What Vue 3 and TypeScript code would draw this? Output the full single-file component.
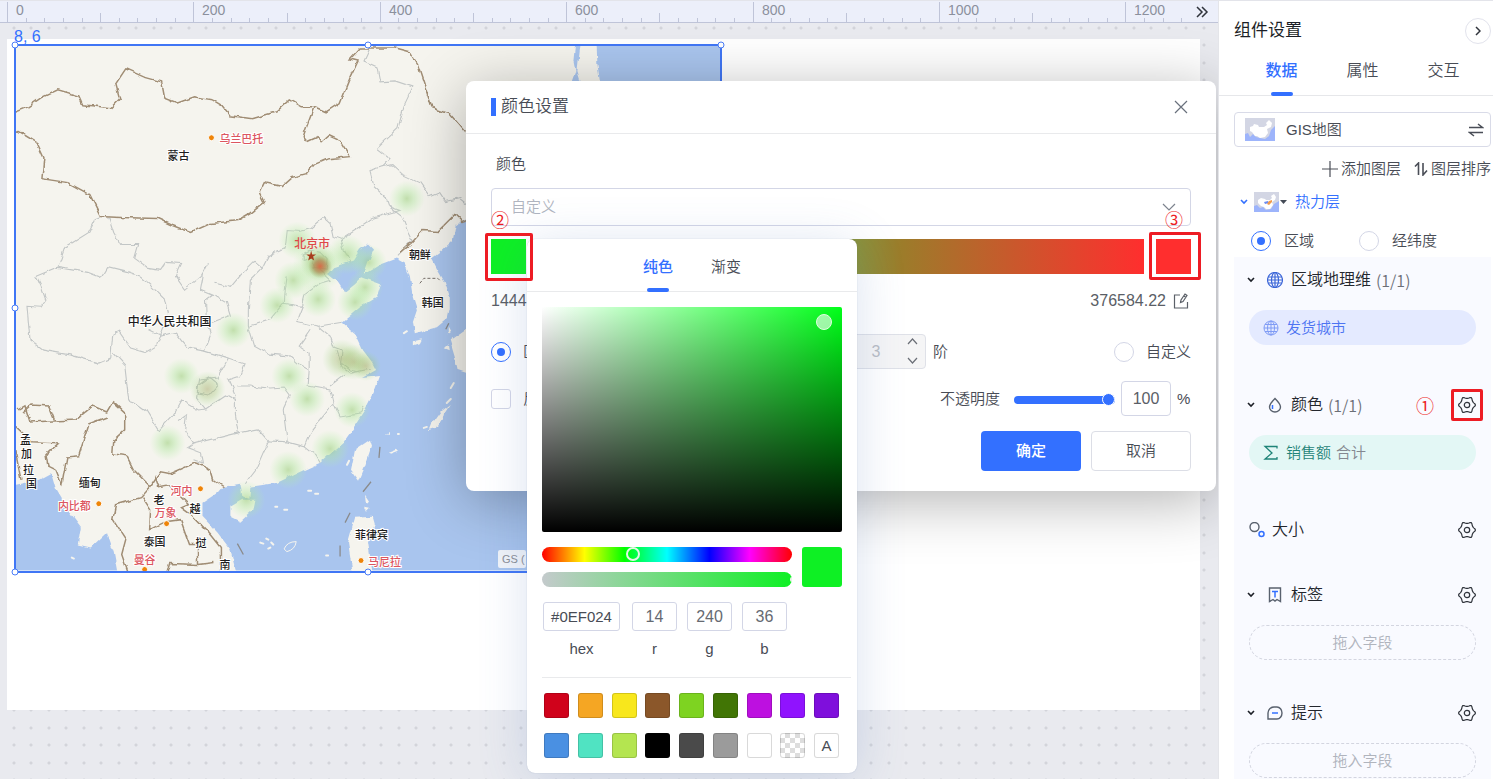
<script setup lang="ts">
import { ref } from 'vue'

const scale = 0.932
const rulerTicks = Array.from({ length: 65 }, (_, i) => ({
  x: Math.round(7 + i * 20 * scale),
  top: i % 10 === 0 ? 1 : i % 5 === 0 ? 12 : 17,
}))
const rulerLabels = [0, 200, 400, 600, 800, 1000, 1200].map((v) => ({
  v,
  x: Math.round(7 + v * scale) + 9,
}))

const gearPath =
  Array.from({ length: 48 }, (_, i) => {
    const a = (i / 48) * Math.PI * 2
    const r = 7.4 + 0.9 * Math.cos(6 * a) + 0.15 * Math.cos(12 * a)
    return `${i ? 'L' : 'M'}${(9 + r * Math.cos(a)).toFixed(2)} ${(9 + r * Math.sin(a)).toFixed(2)}`
  }).join('') + 'Z'

const heat = [
  [407, 198, 18], [297, 240, 19], [293, 280, 19], [318, 299, 18], [347, 254, 20],
  [369, 262, 18], [365, 287, 18], [355, 302, 18], [277, 305, 18], [233, 330, 18],
  [181, 376, 18], [289, 376, 18], [307, 399, 18], [352, 410, 18], [167, 443, 18],
  [330, 449, 19], [288, 470, 19], [246, 500, 19], [318, 266, 26],
]
const denseHeat = [
  [207, 389, 18], [342, 359, 20], [354, 362, 18], [366, 366, 15], [318, 262, 18],
]

interface MapLabel { t: string; x: number; y: number; c?: string }
const mapLabels: MapLabel[] = [
  { t: '蒙古', x: 167, y: 159 },
  { t: '朝鲜', x: 409, y: 259 },
  { t: '韩国', x: 422, y: 307 },
  { t: '孟', x: 19, y: 444 },
  { t: '加', x: 20, y: 458 },
  { t: '拉', x: 22, y: 474 },
  { t: '国', x: 25, y: 488 },
  { t: '缅甸', x: 78, y: 487 },
  { t: '老', x: 153, y: 504 },
  { t: '越', x: 189, y: 513 },
  { t: '泰国', x: 143, y: 546 },
  { t: '挝', x: 195, y: 547 },
  { t: '南', x: 219, y: 569 },
  { t: '菲律宾', x: 355, y: 539 },
  { t: '乌兰巴托', x: 219, y: 142, c: 'capital' },
  { t: '内比都', x: 57, y: 510, c: 'capital' },
  { t: '河内', x: 170, y: 495, c: 'capital' },
  { t: '万象', x: 154, y: 517, c: 'capital' },
  { t: '曼谷', x: 133, y: 564, c: 'capital' },
  { t: '马尼拉', x: 368, y: 566, c: 'capital' },
]
const cityDots = [[211, 137], [200, 489], [98, 504], [166, 524], [144, 570], [361, 561]]

const presets = [
  'c-red', 'c-orange', 'c-yellow', 'c-brown', 'c-lime', 'c-green', 'c-magenta', 'c-violet', 'c-purple',
  'c-blue', 'c-teal', 'c-pale', 'c-black', 'c-dark', 'c-gray', 'c-white', 'c-none', 'c-auto',
]

const tab = ref('数据')
const position = ref('region')
const step = ref('range')
const opacity = ref(100)
const hex = ref('#0EF024')
const rgb = ref([
  { k: 'r', v: 14 },
  { k: 'g', v: 240 },
  { k: 'b', v: 36 },
])

const sections = [
  { id: 'geo', title: '区域地理维', count: '(1/1)', field: '发货城市', extra: '', gear: false },
  { id: 'color', title: '颜色', count: '(1/1)', field: '销售额', extra: '合计', gear: true },
  { id: 'size', title: '大小', count: '', field: '', extra: '', gear: true },
  { id: 'label', title: '标签', count: '', field: '', extra: '', gear: true },
  { id: 'tip', title: '提示', count: '', field: '', extra: '', gear: true },
]
</script>

<template>
  <div class="page">
    <main class="workspace">
      <div class="ruler">
        <svg class="ruler-scale" height="23" aria-hidden="true">
          <line v-for="t in rulerTicks" :key="t.x" :x1="t.x + 0.5" :x2="t.x + 0.5" :y1="t.top" y2="22" />
          <text v-for="l in rulerLabels" :key="l.v" :x="l.x" y="14">{{ l.v }}</text>
        </svg>
        <button class="ruler-more" aria-label="展开">
          <svg width="14" height="12" viewBox="0 0 14 12"><path d="M2 1l5 5-5 5M7 1l5 5-5 5" /></svg>
        </button>
      </div>

      <div class="canvas">
        <div class="widget">
          <span class="coords">8, 6</span>
          <svg class="map" viewBox="15 45 706 526">
            <defs>
              <radialGradient id="heat">
                <stop offset="0" stop-color="#9fd080" stop-opacity=".6" />
                <stop offset=".4" stop-color="#aee59c" stop-opacity=".42" />
                <stop offset="1" stop-color="#b8f2aa" stop-opacity="0" />
              </radialGradient>
              <radialGradient id="heat-dense">
                <stop offset="0" stop-color="#a5a868" stop-opacity=".5" />
                <stop offset=".5" stop-color="#9cc470" stop-opacity=".32" />
                <stop offset="1" stop-color="#a0e08c" stop-opacity="0" />
              </radialGradient>
              <radialGradient id="heat-hot">
                <stop offset="0" stop-color="#dd5a3a" stop-opacity=".85" />
                <stop offset=".5" stop-color="#b07a48" stop-opacity=".6" />
                <stop offset="1" stop-color="#90a860" stop-opacity="0" />
              </radialGradient>
              <filter id="rough" x="-5%" y="-5%" width="110%" height="110%">
                <feTurbulence type="fractalNoise" baseFrequency="0.11" numOctaves="2" seed="4" />
                <feDisplacementMap in="SourceGraphic" scale="5" xChannelSelector="R" yChannelSelector="G" />
              </filter>
            </defs>
            <rect x="15" y="45" width="706" height="526" fill="#a9c5ee" />
            <g fill="#f5f4ee" filter="url(#rough)">
              <path d="M0 30H578L575 60L577 70L572 84L540 150L466 219L456 224L453 240L440 252L432 258L437 268L445 282L450 297L450 309L448 318L437 327L415 333L413 322L417 310L413 297L410 277L405 263L396 258L380 264L364 274L368 262L374 249L368 243L360 249L353 260L333 267L328 273L337 280L345 292L355 284L362 277L381 284L377 297L360 307L342 322L355 333L363 350L372 362L376 370L362 378L380 376L375 390L365 410L350 433L343 443L320 463L300 472L277 483L250 487L249 499L242 497L240 484L222 487L217 493L202 503L202 517L217 533L230 550L238 580H118L113 553L106 533L90 548L77 545L80 527L67 510L55 490L50 473L37 480L15 485H0Z" />
              <path d="M230 507L242 500L255 500L253 510L240 522L230 517Z" />
              <path d="M370 440L372 446L365 467L359 481L351 470L355 450Z" />
              <path d="M355 518L373 517L375 524L368 543L373 575H353L348 543Z" />
              <path d="M470 326L450 340L455 357L458 370L470 374Z" />
              <path d="M582 36H597L598 63L602 90H584L578 70Z" />
              <path d="M432 425L442 411L451 404L436 428L430 430ZM414 341l8-2-2 4-6 2Z" />
              <path d="M389 452l8-3 2 2-8 3ZM386 434l3-2v3ZM366 495l4 6-3 3ZM364 508l5 1-3 3ZM449 326l3 6-3 2ZM444 349l4-4 1 6Z" />
            </g>
            <g class="islets">
              <path d="M260 543l3 1M266 539l2 1M271 543l2 2M268 549l2-1M308 491h3M315 494h3M275 507h2M284 510h3M326 556h2M349 461l-2 4M404 333l3-2M398 434h1M454 383l-3 5M447 403l4-4M424 428l3-1M71 558l2 1" />
              <path d="M284 549q3-7 12-7q-1 8-9 10Z" fill="none" />
            </g>
            <g class="province" filter="url(#rough)">
              <path d="M100 216L95 218L88 232L64 247L57 267L35 276L40 286L45 300L40 307L26 306L29 340L42 350L70 355L98 363L110 358L112 334L118 331L130 348L144 352L156 345L160 336L148 330" />
              <path d="M57 267L87 272L100 277L106 267L126 272L140 277L152 287L165 300L168 313L160 336L175 332L188 348L204 351L210 335L206 322L205 300L212 295L200 290L203 273L208 263L201 275L184 289L175 276L181 263L165 262L160 269L147 267L134 258L138 244L120 244L113 232L108 217" />
              <path d="M214 295L226 302L230 315L212 322M214 283L230 287L240 275L254 261L262 268L250 280L248 310L248 325L254 345L270 354L290 356L300 365L309 370L308 386" />
              <path d="M262 268L268 256L285 248L287 230L300 231L311 228L324 217L330 222L333 236L341 239L358 228L372 218L400 210L389 206L386 197L374 186L370 170L382 166L390 158L377 148L398 128L404 105L413 86L395 80L380 81L377 66L364 60L370 47" />
              <path d="M382 166L392 164L403 174L420 182L430 196L440 192L446 201L460 198L470 206M389 206L402 216L408 232L412 240L398 255M341 239L344 249L350 262" />
              <path d="M303 254L310 250L321 252L327 258L326 270L314 268L312 258L303 260ZM318 269L330 280L320 283L305 294L302 306L283 303L284 290L286 275M283 303L270 319L249 326M302 306L296 321L318 326L342 322M318 326L330 336L334 347L342 350L340 366L350 373L370 369M310 330L299 346L309 353L309 370" />
              <path d="M112 352L124 365L128 400L134 402L145 410L158 431L172 416L181 400L198 410L205 409L196 398L199 380L217 378L228 358L245 364L240 376L228 380L235 396L235 415L238 434L258 430L268 441L287 442L305 447L312 430L333 404L330 390L308 386M204 351L228 358M205 409L226 395L235 400M237 386L250 386L270 388L284 387L290 395L283 410L287 442" />
              <path d="M178 421L186 415L184 430L193 444L238 433M193 444L187 448L200 453L202 463L193 460M268 441L255 471L245 484M305 447L316 456L320 463M334 404L340 417L360 414L364 406M197 386L208 378L217 385L208 395L197 393Z" />
              <path d="M336 350L340 362L350 370L360 372M331 385L345 374" />
            </g>
            <g class="border" filter="url(#rough)">
              <path d="M12 112L27 106L40 97L57 89L78 95L82 104L110 107L119 98L115 83L125 68L143 76L161 81L164 97L177 102L194 96L212 99L222 105L230 115L252 118L276 111L289 99L301 106L314 106L326 111L340 102L350 77L358 60L350 58L360 47L395 47L410 51L418 64L424 82L432 107L450 113L466 132" />
              <path d="M314 106L305 130L303 136L307 141L318 136L322 141L329 135L340 140L350 156L328 158L314 164L306 173L292 177L282 186L264 182L259 192L264 202L250 213L238 220L210 223L190 232L172 225L157 218L120 217L100 216L89 194L67 182L41 178L43 157L36 142L23 134L12 128" />
              <path d="M472 218L462 221L455 214L438 231L423 230L412 242L400 252" />
              <path d="M17 410L24 406L29 422L75 420L92 406L106 412L112 402L124 413L124 430L113 440L112 454L126 456L133 470L150 487L160 472L170 474L195 463L210 470L213 480L223 487" />
              <path d="M22 412L30 405L48 406L54 421M106 417L88 424L78 456L66 457L61 485L55 470L47 466L45 455L58 443L30 442L12 425M12 440L20 480M150 487L140 498L115 505L112 520L125 540L121 555L128 575M154 475L158 487L168 485L188 505L181 508L192 516L208 533L220 548L220 575M142 498L150 510L149 530L165 522L180 520L189 545H197L197 565L170 564L167 575M197 565L214 563" />
            </g>
            <path class="dash-border" d="M420 283l4-5h14l3 3" />
            <path class="sea-mark" d="M379 458l1-11M363 492l8-10M345 523l5-10M340 546v11M237 544l6 11M446 329l3-6" />
            <circle v-for="(h, i) in heat" :key="'h' + i" :cx="h[0]" :cy="h[1]" :r="h[2]" fill="url(#heat)" />
            <circle v-for="(h, i) in denseHeat" :key="'d' + i" :cx="h[0]" :cy="h[1]" :r="h[2]" fill="url(#heat-dense)" />
            <circle cx="320" cy="266" r="12" fill="url(#heat-hot)" />
            <path d="M311 250l1 4h4l-3 2 1 4-3-2-3 2 1-4-3-2h4z" fill="#a83c1e" />
            <circle v-for="(d, i) in cityDots" :key="'c' + i" class="city" :cx="d[0]" :cy="d[1]" r="3" />
            <text v-for="l in mapLabels" :key="l.t" :x="l.x" :y="l.y" class="map-text" :class="l.c">{{ l.t }}</text>
            <text x="127" y="326" class="map-text country">中华人民共和国</text>
            <text x="294" y="248" class="map-text beijing">北京市</text>
          </svg>
          <span class="licence">GS (</span>
          <i class="handle nw" /><i class="handle n" /><i class="handle ne" />
          <i class="handle w" /><i class="handle sw" /><i class="handle s" />
        </div>
      </div>
    </main>

    <section class="modal" role="dialog" aria-labelledby="modal-title">
      <header class="modal-head">
        <h2 id="modal-title">颜色设置</h2>
        <button class="close" aria-label="关闭">
          <svg width="14" height="14" viewBox="0 0 14 14"><path d="M1 1l12 12M13 1L1 13" /></svg>
        </button>
      </header>
      <div class="modal-body">
        <label class="field-label" for="scheme">颜色</label>
        <div class="select-wrap">
          <select id="scheme"><option>自定义</option></select>
          <svg width="14" height="8" viewBox="0 0 14 8"><path d="M1 1l6 6 6-6" /></svg>
        </div>
        <div class="ramp-row">
          <button class="end start" aria-label="起始颜色" />
          <span class="mark mark-start" />
          <span class="num num-start">②</span>
          <div class="ramp" />
          <button class="end stop" aria-label="结束颜色" />
          <span class="mark mark-stop" />
          <span class="num num-stop">③</span>
        </div>
        <div class="values">
          <span>1444</span>
          <span class="max">376584.22
            <button aria-label="编辑">
              <svg width="16" height="16" viewBox="0 0 16 16"><path d="M7 2H1.500V15H14.500V9M7.500 9.500L8 7L12 1L14 2.500L10 8.500ZM11 3l2 1.500" /></svg>
            </button>
          </span>
        </div>
        <div class="options">
          <label class="choice"><input v-model="step" type="radio" value="range" />区间</label>
          <div class="steps">
            <div class="stepper">
              <input type="text" value="3" disabled aria-label="阶数" />
              <svg width="11" height="26" viewBox="0 0 11 26"><path d="M1 6l4.500-5L10 6M1 20l4.500 5 4.500-5" /></svg>
            </div>
            <span>阶</span>
          </div>
          <label class="choice"><input v-model="step" type="radio" value="custom" />自定义</label>
        </div>
        <div class="options second">
          <label class="choice"><input type="checkbox" />反转</label>
          <div class="opacity">
            <label for="alpha">不透明度</label>
            <input id="alpha" v-model="opacity" class="slider" type="range" min="0" max="100" />
            <input v-model="opacity" class="box" type="text" aria-label="不透明度数值" />
            <span class="pct">%</span>
          </div>
        </div>
        <footer class="actions">
          <button class="primary">确定</button>
          <button class="plain">取消</button>
        </footer>
      </div>

      <div class="picker">
        <nav class="picker-tabs">
          <button class="on">纯色</button>
          <button>渐变</button>
        </nav>
        <div class="picker-body">
          <div class="shade"><i /></div>
          <div class="bars">
            <div class="tracks">
              <div class="hue"><i /></div>
              <div class="alpha" />
            </div>
            <div class="current" />
          </div>
          <div class="codes">
            <label class="hex"><input v-model="hex" type="text" />hex</label>
            <label v-for="c in rgb" :key="c.k"><input v-model="c.v" type="text" />{{ c.k }}</label>
          </div>
          <div class="presets">
            <button v-for="p in presets" :key="p" :class="p" :aria-label="p">{{ p === 'c-auto' ? 'A' : '' }}</button>
          </div>
        </div>
      </div>
    </section>

    <aside class="panel">
      <header class="panel-head">
        <h1>组件设置</h1>
        <button class="round" aria-label="收起">
          <svg width="6" height="10" viewBox="0 0 6 10"><path d="M1 1l4 4-4 4" /></svg>
        </button>
      </header>
      <nav class="tabs">
        <button v-for="t in ['数据', '属性', '交互']" :key="t" :class="{ on: tab === t }" @click="tab = t">{{ t }}</button>
      </nav>
      <div class="panel-body">
        <button class="chart-type">
          <svg class="thumb" width="30" height="23" viewBox="0 0 30 23">
            <rect width="30" height="23" fill="#d3d6e4" />
            <path d="M0 16l3-1 2 4 3-3 3 3 4 1 5 1 4-3 2-6 4-4v15H0Z" fill="#9db4fb" />
            <path d="M5 9l3-1 1-2 4 1 1 2 5 0 3-2-1-2 3-3 3 3-1 4-4 2 1 4-3 4-5 1-3-2-2 0-3-4-2-1Z" fill="#fff" />
          </svg>
          <span>GIS地图</span>
          <svg class="swap" width="16" height="14" viewBox="0 0 16 14"><path d="M1 4.500H14.500L10 1M15 9.500H1.500L6 13" /></svg>
        </button>
        <div class="layer-tools">
          <button><svg width="16" height="16" viewBox="0 0 16 16"><path d="M8 0v16M0 8h16" /></svg>添加图层</button>
          <button><svg width="14" height="14" viewBox="0 0 14 14"><path class="bold" d="M1 4.500L4.500 1V13M9 1V13L13 8.500" /></svg>图层排序</button>
        </div>
        <div class="layer">
          <svg class="chev blue" width="8" height="6" viewBox="0 0 8 6"><path d="M1 1l3 3 3-3" /></svg>
          <svg class="thumb" width="25" height="20" viewBox="0 0 25 20">
            <rect width="25" height="20" fill="#d3d6e4" />
            <path d="M0 14l3-1 3 3 3-1 3 3 5-1 3-5 5-3v11H0Z" fill="#9db4fb" />
            <path d="M4 8l3-2 4 1 1 1 4 0 2-2-1-2 3-2 2 3-1 3-3 2 1 3-3 4-4 0-2-2-3-1-3-3Z" fill="#fff" />
            <path d="M10 10l4-1 1 2-4 1Z" fill="#6c8cf0" />
            <path d="M15 9l3-1v2l-3 3-2-1Z" fill="#f29a4a" />
          </svg>
          <svg width="7" height="4" viewBox="0 0 7 4"><path d="M0 0h7L3.500 4Z" fill="#444b57" /></svg>
          <span>热力层</span>
        </div>
        <div class="geo-mode">
          <label class="choice"><input v-model="position" type="radio" value="region" />区域</label>
          <label class="choice"><input v-model="position" type="radio" value="lnglat" />经纬度</label>
        </div>
        <div class="sections">
          <section v-for="s in sections" :key="s.id" class="block" :class="'block-' + s.id">
            <header>
              <svg v-if="s.id !== 'size'" class="chev" width="8" height="6" viewBox="0 0 8 6"><path d="M1 1l3 3 3-3" /></svg>
              <svg v-if="s.id === 'geo'" class="ico globe" width="16" height="16" viewBox="0 0 16 16">
                <circle cx="8" cy="8" r="7.500" /><ellipse cx="8" cy="8" rx="3.500" ry="7.500" /><path d="M8 0v16M1 5h14M0 8h16M1 11h14" />
              </svg>
              <svg v-else-if="s.id === 'color'" class="ico" width="16" height="16" viewBox="0 0 16 16">
                <path d="M8 1.500C10.500 4 13.500 7 13.500 10a5.500 5 0 0 1-11 0C2.500 7 5.500 4 8 1.500Z" /><path class="b" d="M5.500 8v4" />
              </svg>
              <svg v-else-if="s.id === 'size'" class="ico" width="16" height="16" viewBox="0 0 16 16">
                <circle cx="5.500" cy="5" r="4.500" /><circle class="b" cx="12.500" cy="12" r="2.500" />
              </svg>
              <svg v-else-if="s.id === 'label'" class="ico" width="16" height="16" viewBox="0 0 16 16">
                <path d="M2.500 1h11v13.500l-3.500-2-2 1.500-2-1.500-3.500 2Z" /><path class="b" d="M5 4.500h6M8 4.500v6" />
              </svg>
              <svg v-else class="ico" width="16" height="16" viewBox="0 0 16 16">
                <path d="M1 14V8a6 6 0 0 1 6-6h3a5 6 0 0 1 0 12Z" /><path class="b" d="M5 8h6" />
              </svg>
              <h3>{{ s.title }}</h3>
              <span v-if="s.count" class="count">{{ s.count }}</span>
              <span v-if="s.id === 'color'" class="num num-one">①</span>
              <button v-if="s.gear" class="gear" :aria-label="s.title + '设置'">
                <svg width="18" height="18" viewBox="0 0 18 18"><path :d="gearPath" /><circle cx="9" cy="9" r="2.700" /></svg>
                <span v-if="s.id === 'color'" class="mark mark-gear" />
              </button>
            </header>
            <div v-if="s.field" class="pill">
              <svg v-if="s.id === 'geo'" width="16" height="16" viewBox="0 0 16 16">
                <circle cx="8" cy="8" r="7" /><ellipse cx="8" cy="8" rx="3.500" ry="7" /><path d="M8 1v14M2 4.500h12M1 8h14M2 11.500h12" />
              </svg>
              <svg v-else width="16" height="16" viewBox="0 0 16 16"><path class="sum" d="M14 3.500V1.500H2L9 8L2 14H14V12" /></svg>
              <span>{{ s.field }}</span><em v-if="s.extra">{{ s.extra }}</em>
            </div>
            <div v-else-if="s.id !== 'size'" class="pill drop">拖入字段</div>
          </section>
        </div>
      </div>
    </aside>
  </div>
</template>

<style>
body {
  margin: 0;
}
</style>

<style scoped>
.page {
  position: relative;
  display: flex;
  height: 100vh;
  overflow: hidden;
  color: #484c55;
  font-family: "Liberation Sans", "Noto Sans CJK SC", sans-serif;
  font-size: 15px;
  font-weight: 350;
  line-height: 20px;
}
.page * {
  box-sizing: border-box;
}
button,
input,
select {
  margin: 0;
  padding: 0;
  border: 0;
  background: none;
  color: inherit;
  font: inherit;
}
h1,
h2,
h3 {
  margin: 0;
  font-weight: inherit;
}
svg {
  display: block;
  flex: none;
  fill: none;
  stroke-width: 1.2;
}

/* Workspace */
.workspace {
  flex: 1;
  min-width: 0;
  background-color: #e9eaef;
  background-image:
    radial-gradient(circle at 14px 28px, #d3d4da 1px, transparent 2px),
    radial-gradient(circle at 31px 28px, #d3d4da 1px, transparent 2px),
    radial-gradient(circle at 14px 10px, #d3d4da 1px, transparent 2px),
    radial-gradient(circle at 31px 10px, #d3d4da 1px, transparent 2px);
  background-size: 35px 35px;
}
.ruler {
  position: relative;
  height: 23px;
  border-top: 1px solid #e3e4ea;
  border-bottom: 1px solid #bfc4d8;
  background: #eceffa;
}
.ruler-scale {
  width: 100%;
  height: 21px;
}
.ruler-scale line {
  stroke: #bfc4d8;
  stroke-width: 1;
}
.ruler-scale text {
  fill: #8b909d;
  font-size: 14px;
}
.ruler-more {
  position: absolute;
  top: 0;
  right: 0;
  display: flex;
  align-items: center;
  width: 23px;
  height: 21px;
  background: #eceffa;
}
.ruler-more svg {
  stroke: #30343c;
  stroke-width: 1.5;
}
.canvas {
  position: relative;
  aspect-ratio: 16 / 9;
  margin: 16px 18px 0 7px;
  background: #fff;
}
.widget {
  position: absolute;
  top: 5px;
  left: 7px;
  border: 2px solid #4076f5;
  width: 708px;
}
.coords {
  position: absolute;
  bottom: 100%;
  left: -2px;
  color: #3370ff;
  font-size: 16px;
  line-height: 18px;
  white-space: nowrap;
}
.map {
  width: 100%;
}
.map-text {
  fill: #1d1d1d;
  stroke: #fff;
  stroke-width: 2px;
  paint-order: stroke;
  font-size: 11px;
  font-weight: 500;
}
.map-text.country {
  font-size: 12px;
}
.map-text.capital {
  fill: #dc5560;
}
.map-text.beijing {
  fill: #e04848;
  font-size: 12px;
  stroke: none;
}
.city {
  fill: #ee8408;
  stroke: #fff;
  stroke-width: 1;
}
.islets {
  fill: none;
  stroke: #f5f4ee;
  stroke-width: 2;
  stroke-linecap: round;
}
.islets path + path {
  stroke-width: 1;
}
.province {
  stroke: #c2c6c6;
  stroke-width: 1.1;
}
.border {
  stroke: #a08d74;
  stroke-width: 1.5;
}
.dash-border {
  stroke: #77706a;
  stroke-width: 1;
  stroke-dasharray: 3 2;
}
.sea-mark {
  stroke: #8b8b8b;
  stroke-width: 1.3;
}
.licence {
  position: absolute;
  right: 194px;
  bottom: 3px;
  width: 28px;
  overflow: hidden;
  padding-left: 4px;
  border-radius: 2px;
  background: #f1f4f9;
  color: #8b8f96;
  font-size: 11px;
  line-height: 18px;
  white-space: pre;
}
.handle {
  position: absolute;
  width: 7px;
  height: 7px;
  border: 1px solid #4a7df8;
  border-radius: 50%;
  background: #fff;
  transform: translate(-50%, -50%);
}
.nw { top: -1px; left: -1px; }
.n { top: -1px; left: 50%; }
.ne { top: -1px; left: calc(100% + 1px); }
.w { top: 50%; left: -1px; }
.sw { top: calc(100% + 1px); left: -1px; }
.s { top: calc(100% + 1px); left: 50%; }

/* Marks */
.mark {
  position: absolute;
  z-index: 2;
  border: 3px solid #ed1c24;
  border-radius: 2px;
  pointer-events: none;
}
.num {
  position: absolute;
  color: #ed1c24;
  font-family: "Noto Sans CJK SC", sans-serif;
  font-size: 18px;
  font-weight: 400;
  line-height: 20px;
}

/* Modal */
.modal {
  position: absolute;
  top: 81px;
  right: 277px;
  width: 750px;
  border-radius: 8px;
  background: #fff;
  box-shadow: 0 10px 60px rgba(0, 0, 0, 0.3);
}
.modal-head {
  display: flex;
  align-items: center;
  justify-content: space-between;
  height: 53px;
  padding: 0 28px 0 25px;
  border-bottom: 1px solid #e9eaec;
}
.modal-head h2 {
  padding-left: 5px;
  border-left: 5px solid #3370ff;
  font-size: 17px;
  line-height: 18px;
}
.close svg {
  stroke: #69707c;
}
.modal-body {
  display: flex;
  flex-direction: column;
  padding: 20px 25px;
}
.field-label {
  margin-left: 5px;
}
.select-wrap {
  position: relative;
  margin-top: 14px;
}
.select-wrap select {
  width: 100%;
  height: 38px;
  padding-left: 19px;
  border: 1px solid #d3d6e6;
  border-radius: 4px;
  appearance: none;
  color: #b0b5c0;
}
.select-wrap svg {
  position: absolute;
  top: 15px;
  right: 15px;
  stroke: #7d838e;
}
.ramp-row {
  position: relative;
  display: flex;
  gap: 12px;
  height: 35px;
  margin-top: 13px;
}
.end {
  width: 35px;
}
.start {
  background: #0ef024;
}
.stop {
  background: #ff2e2e;
}
.ramp {
  flex: 1;
  background: linear-gradient(90deg, #0ef024, #8b913a 53%, #9c7c2a 60%, #c8592c 78%, #ff2e2e);
}
.mark-start {
  top: -6px;
  left: -6px;
  width: 48px;
  height: 48px;
}
.mark-stop {
  top: -7px;
  right: -10px;
  width: 52px;
  height: 48px;
}
.num-start {
  top: -30px;
  left: 0;
}
.num-stop {
  top: -30px;
  right: 8px;
}
.values {
  display: flex;
  justify-content: space-between;
  margin-top: 17px;
  color: #5a5e66;
  font-size: 16px;
}
.max {
  display: flex;
  align-items: center;
  gap: 7px;
  padding-right: 2px;
}
.max svg {
  stroke: #5b6068;
}
.options {
  position: relative;
  display: flex;
  align-items: center;
  justify-content: space-between;
  height: 35px;
  margin-top: 23px;
}
.options.second {
  margin-top: 12px;
}
.steps {
  position: absolute;
  left: 335px;
  display: flex;
  align-items: center;
  gap: 7px;
}
.stepper {
  position: relative;
  width: 100px;
  height: 35px;
}
.stepper input {
  width: 100%;
  height: 100%;
  border: 1px solid #dfe1e8;
  border-radius: 4px;
  background: #f5f5f6;
  color: #b9bdc5;
  font-size: 16px;
  text-align: center;
}
.stepper svg {
  position: absolute;
  top: 4px;
  right: 8px;
  stroke: #6b6f77;
}
.choice {
  display: flex;
  align-items: center;
  gap: 12px;
}
.choice input {
  display: grid;
  place-items: center;
  width: 20px;
  height: 20px;
  border: 1px solid #d3d6e6;
  border-radius: 50%;
  appearance: none;
  background: #fff;
}
.choice input[type="checkbox"] {
  border-radius: 3px;
}
.choice input:checked {
  border-color: #3370ff;
}
.choice input:checked::before {
  width: 8px;
  height: 8px;
  border-radius: 50%;
  background: #3370ff;
  content: "";
}
.opacity {
  display: flex;
  align-items: center;
}
.slider {
  width: 101px;
  height: 8px;
  margin: 2px 6px 0 14px;
  border-radius: 4px;
  appearance: none;
  background: #3370ff;
}
.slider::-webkit-slider-thumb {
  width: 13px;
  height: 13px;
  border: 1px solid #fff;
  border-radius: 50%;
  appearance: none;
  background: #3370ff;
}
.box {
  width: 50px;
  height: 35px;
  border: 1px solid #d3d6e6;
  border-radius: 4px;
  color: #5a5e66;
  font-size: 16px;
  text-align: center;
}
.pct {
  width: 20px;
  padding-left: 6px;
}
.actions {
  display: flex;
  justify-content: flex-end;
  gap: 10px;
  margin-top: 15px;
}
.actions button {
  width: 100px;
  height: 40px;
  border-radius: 4px;
}
.primary {
  background: #3370ff;
  color: #fff;
  font-weight: 500;
}
.actions .plain {
  border: 1px solid #dcdee6;
}

/* Colour picker */
.picker {
  position: absolute;
  top: 158px;
  left: 61px;
  width: 330px;
  border-radius: 8px;
  background: #fff;
  box-shadow: 0 0 1px rgba(80, 100, 140, 0.4), 0 6px 50px rgba(70, 110, 180, 0.2);
}
.picker-tabs {
  display: flex;
  justify-content: center;
  gap: 38px;
  height: 53px;
  border-bottom: 1px solid #e9eaec;
}
.picker-tabs button {
  position: relative;
  padding-top: 3px;
}
.picker-tabs .on,
.tabs .on {
  color: #3370ff;
  font-weight: 500;
}
.picker-tabs .on::after,
.tabs .on::after {
  position: absolute;
  bottom: -1px;
  left: calc(50% - 11px);
  width: 22px;
  height: 4px;
  border-radius: 2px;
  background: #3370ff;
  content: "";
}
.picker-body {
  padding: 15px;
}
.shade {
  position: relative;
  height: 225px;
  border-radius: 2px;
  background:
    linear-gradient(0deg, #000, transparent),
    linear-gradient(90deg, #fff, transparent),
    #00ff19;
}
.shade i {
  position: absolute;
  top: 7px;
  right: 10px;
  width: 16px;
  height: 16px;
  border: 1px solid #e0ffe0;
  border-radius: 50%;
  background: rgba(255, 255, 255, 0.6);
}
.bars {
  display: flex;
  gap: 10px;
  margin-top: 15px;
}
.tracks {
  display: flex;
  flex: 1;
  flex-direction: column;
  gap: 10px;
}
.hue,
.alpha {
  position: relative;
  height: 15px;
  border-radius: 8px;
}
.hue {
  background: linear-gradient(90deg, #f00, #ff0 17%, #0f0 33%, #0ff 50%, #00f 67%, #f0f 83%, #f00);
}
.hue i {
  position: absolute;
  top: 0;
  left: 84px;
  width: 14px;
  height: 14px;
  border: 2px solid #e6f5e6;
  border-radius: 50%;
}
.alpha {
  background: linear-gradient(90deg, #c4cacc, #0ef024);
}
.alpha::after {
  position: absolute;
  top: 5px;
  right: 0;
  width: 2px;
  height: 5px;
  border-radius: 2px 0 0 2px;
  background: #e6f5e6;
  content: "";
}
.current {
  width: 40px;
  border-radius: 3px;
  background: #0ef024;
}
.codes {
  display: flex;
  gap: 10px;
  margin-top: 15px;
}
.codes label {
  display: flex;
  flex-direction: column;
  align-items: center;
  gap: 8px;
  width: 45px;
}
.codes .hex {
  width: 77px;
  margin: 0 2px 0 1px;
}
.codes input {
  width: 100%;
  height: 29px;
  border: 1px solid #d3d6e6;
  border-radius: 3px;
  color: #666a72;
  font-size: 16px;
  text-align: center;
}
.codes .hex input {
  color: #484c55;
  font-size: 15px;
}
.presets {
  display: grid;
  grid-template-columns: repeat(9, 25px);
  justify-content: space-between;
  row-gap: 15px;
  margin: 18px -9px 0 0;
  padding: 15px 12px 0 2px;
  border-top: 1px solid #e9eaec;
}
.presets button {
  height: 25px;
  border-radius: 3px;
  box-shadow: inset 0 0 0 1px rgba(0, 0, 0, 0.15);
}
.c-red { background: #d0021b; }
.c-orange { background: #f5a623; }
.c-yellow { background: #f8e71c; }
.c-brown { background: #8b572a; }
.c-lime { background: #7ed321; }
.c-green { background: #417505; }
.c-magenta { background: #bd10e0; }
.c-violet { background: #9013fe; }
.c-purple { background: #7f0fdc; }
.c-blue { background: #4a90e2; }
.c-teal { background: #50e3c2; }
.c-pale { background: #b4e550; }
.c-black { background: #000; }
.c-dark { background: #4a4a4a; }
.c-gray { background: #9b9b9b; }
.c-white { background: #fff; }
.c-none { background: conic-gradient(#ddd 25%, #fff 0 50%, #ddd 0 75%, #fff 0) 0 0 / 10px 10px; }

/* Settings panel */
.panel {
  position: relative;
  width: 275px;
  border-top: 1px solid #e3e4ea;
  border-left: 1px solid #e4e5e9;
  background: #fff;
}
.panel-head {
  display: flex;
  align-items: center;
  justify-content: space-between;
  height: 58px;
  padding: 2px 2px 0 15px;
}
.panel-head h1 {
  color: #1c1f26;
  font-size: 17px;
  font-weight: 400;
}
.round {
  display: grid;
  place-items: center;
  width: 26px;
  height: 26px;
  border: 1px solid #e2e3ec;
  border-radius: 50%;
}
.round svg {
  stroke: #30343c;
  stroke-width: 1.5;
}
.tabs {
  display: flex;
  height: 37px;
  padding: 0 9px 0 22px;
  border-bottom: 1px solid #e6e7ea;
}
.tabs button {
  position: relative;
  flex: 1;
  padding-bottom: 12px;
  font-size: 16px;
}
.tabs .on::after {
  bottom: -1px;
}
.panel-body {
  padding: 16px 2px 0 15px;
}
.chart-type {
  display: flex;
  align-items: center;
  gap: 11px;
  width: 100%;
  height: 35px;
  padding: 0 6px 0 10px;
  border: 1px solid #d9dbe8;
  border-radius: 4px;
}
.swap {
  margin-left: auto;
}
.swap,
.layer-tools svg {
  stroke: #4a4e57;
}
.swap path {
  stroke-width: 1.5;
}
.layer-tools {
  display: flex;
  justify-content: flex-end;
  gap: 13px;
  margin-top: 12px;
}
.layer-tools button {
  display: flex;
  align-items: center;
  gap: 3px;
}
.bold {
  stroke-width: 1.6;
}
.layer {
  display: flex;
  align-items: center;
  height: 20px;
  margin-top: 13px;
  padding-left: 6px;
  color: #3370ff;
}
.chev {
  stroke: #1c1f26;
  stroke-width: 1.6;
}
.chev.blue {
  margin-right: 6px;
  stroke: #3370ff;
}
.layer span {
  margin-left: 8px;
}
.layer svg + svg + svg {
  margin-left: 1px;
}
.geo-mode {
  display: flex;
  gap: 45px;
  margin: 19px 0 6px;
  padding-left: 17px;
}
.geo-mode .choice {
  gap: 13px;
}
.sections {
  height: 600px;
  background: #f9faff;
}
.block {
  height: 125px;
  padding: 0 15px;
}
.block-size {
  height: 65px;
}
.block-label {
  height: 118px;
}
.block header {
  position: relative;
  display: flex;
  align-items: center;
  height: 45px;
}
.block header .chev {
  margin: 0 12px 0 -2px;
}
.ico {
  margin-right: 8px;
  stroke: #59616e;
  stroke-width: 1.4;
}
.block-size .ico {
  margin-right: 7px;
}
.ico .b {
  stroke: #3370ff;
  stroke-width: 1.5;
}
.globe {
  stroke: #3c66d8;
  stroke-width: 1.2;
}
.block h3 {
  color: #23262d;
  font-size: 16px;
}
.count {
  margin-left: 5px;
  color: #6b6f77;
  font-family: "Noto Sans CJK SC", sans-serif;
  font-size: 16px;
}
.gear {
  position: relative;
  margin-left: auto;
}
.gear svg {
  stroke: #30343c;
}
.mark-gear {
  top: -7px;
  left: -7px;
  width: 32px;
  height: 32px;
}
.num-one {
  right: 42px;
}
.pill {
  display: flex;
  align-items: center;
  height: 35px;
  margin-top: 8px;
  padding: 0 14px;
  border-radius: 18px;
  background: #e4eaff;
  color: #4d74f2;
}
.pill svg {
  margin-right: 7px;
  stroke: #7f9bf5;
  stroke-width: 1;
}
.block-color .pill {
  background: #e3f7f5;
  color: #1f8478;
}
.pill .sum {
  stroke: #1f8478;
  stroke-width: 1.3;
}
.pill em {
  margin-left: 5px;
  color: #848890;
  font-style: normal;
}
.pill.drop {
  justify-content: center;
  border: 1px dashed #d3d5e0;
  background: none;
  color: #b0b4bd;
}
</style>
